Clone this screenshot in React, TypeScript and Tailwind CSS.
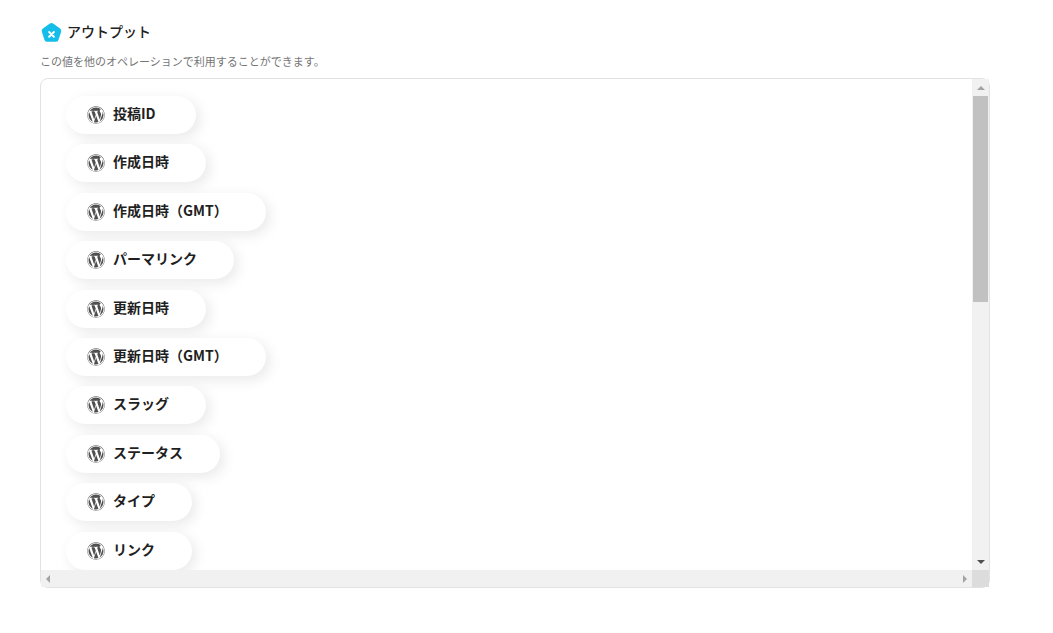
import { FaWordpress } from "react-icons/fa";

const outputs = [
  { label: "投稿ID", spacing: "pr-[40px]" },
  { label: "作成日時", spacing: "pr-[37px]" },
  { label: "作成日時（GMT）", spacing: "pr-[38px]" },
  { label: "パーマリンク", spacing: "pr-[37px]" },
  { label: "更新日時", spacing: "pr-[37px]" },
  { label: "更新日時（GMT）", spacing: "pr-[38px]" },
  { label: "スラッグ", spacing: "pr-[37px]" },
  { label: "ステータス", spacing: "pr-[37px]" },
  { label: "タイプ", spacing: "pr-[37px]" },
  { label: "リンク", spacing: "pr-[37px]" },
];

const OutputPill = ({ label, spacing }: { label: string; spacing: string }) => {
  return (
    <div className={`flex h-[38px] items-center gap-[8px] self-start rounded-full bg-white pl-[21px] shadow-[4px_4px_14px_rgba(0,0,0,0.09)] ${spacing}`}>
      <FaWordpress className="h-[18px] w-[18px] shrink-0 text-[#505050]" />
      <span className="pb-1 text-sm font-bold whitespace-nowrap text-[#1f1f1f]">{label}</span>
    </div>
  );
};

const App = () => {
  return (
    <div
      className="h-[633px] w-[1053px] overflow-hidden bg-white pl-10 pt-[22px]"
      style={{ fontFamily: '"Noto Sans CJK JP", "DejaVu Sans", sans-serif' }}
    >
      <div className="flex h-[21px] items-center gap-[5px] pl-px">
        <svg viewBox="0 0 22 21" className="h-[21px] w-[21px]">
          <path
            d="M9.3 1.1a3 3 0 0 1 3.4 0l7.3 5.2a3 3 0 0 1 1.1 3.3l-2.8 8.7a3 3 0 0 1-2.8 2H6.5a3 3 0 0 1-2.8-2L.9 9.6A3 3 0 0 1 2 6.3z"
            fill="#14bdea"
          />
          <path d="M8.5 10l5 5M13.5 10l-5 5" stroke="#ffffff" strokeWidth="2" strokeLinecap="round" />
        </svg>
        <h2 className="pb-1 text-sm leading-none font-medium text-[#222222]">アウトプット</h2>
      </div>
      <p className="mt-[11px] text-[11px] leading-[14px] text-[#757575]">
        この値を他のオペレーションで利用することができます。
      </p>

      <div className="mt-[10px] flex h-[510px] w-[950px] flex-col rounded-lg border border-[#e2e2e2]">
        <div className="flex min-h-0 flex-1">
          <div className="flex flex-1 flex-col gap-[10.4px] overflow-hidden pl-[25px] pt-[17px]">
            {outputs.map((item) => (
              <OutputPill key={item.label} label={item.label} spacing={item.spacing} />
            ))}
          </div>
          <div className="flex w-[17px] flex-col items-center bg-[#f1f1f1]">
            <div className="flex h-[17px] w-full items-center justify-center">
              <div className="h-0 w-0 border-x-[4px] border-b-[4px] border-x-transparent border-b-[#a3a3a3]" />
            </div>
            <div className="h-[206px] w-[15px] bg-[#c1c1c1]" />
            <div className="flex-1" />
            <div className="flex h-[17px] w-full items-center justify-center">
              <div className="h-0 w-0 border-x-[4px] border-t-[4px] border-x-transparent border-t-[#505050]" />
            </div>
          </div>
        </div>
        <div className="flex h-[17px] shrink-0">
          <div className="flex flex-1 items-center justify-between bg-[#f1f1f1] px-[5px]">
            <div className="h-0 w-0 border-y-[4px] border-r-[4px] border-y-transparent border-r-[#a3a3a3]" />
            <div className="h-0 w-0 border-y-[4px] border-l-[4px] border-y-transparent border-l-[#a3a3a3]" />
          </div>
          <div className="w-[17px] bg-[#dcdcdc]" />
        </div>
      </div>
    </div>
  );
};

export default App;
